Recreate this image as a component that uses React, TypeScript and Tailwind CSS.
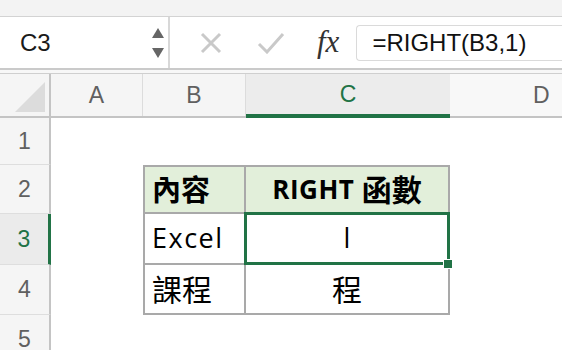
import React from "react";

const cols = "grid grid-cols-[51px_92px_103px_204px_1fr]";
const cellFont = { fontFamily: '"Open Sans", "Noto Sans CJK TC", sans-serif' };

function RowHead({ n, active = false, h }: { n: number; active?: boolean; h: string }) {
  return (
    <div
      className={`${h} flex items-center justify-center border-b border-[#dedede] text-[23px] ${
        active ? "bg-[#ebebeb] text-[#217346] border-r-[3px] border-r-[#217346]" : "bg-[#f5f5f5] text-[#606060] border-r-2 border-r-[#c4c4c4]"
      }`}
      style={{ fontFamily: '"Liberation Sans", Arial, sans-serif' }}
    >
      {n}
    </div>
  );
}

export default function App() {
  return (
    <div className="w-[562px] h-[350px] overflow-hidden bg-white" style={{ fontFamily: '"Liberation Sans", Arial, sans-serif' }}>
      {/* top strip */}
      <div className="h-[17px] bg-[#f3f3f3] border-b border-[#d3d3d3]" />

      {/* formula bar */}
      <div className="h-[53px] flex bg-white border-b-2 border-[#cacaca]">
        <div className="w-[170px] flex items-center justify-between pl-[20px] pr-[3px] border-r-2 border-[#d8d8d8]">
          <span className="text-[24px] text-[#1a1a1a]">C3</span>
          <svg width="14" height="34" viewBox="0 0 14 34">
            <path d="M7 2 L13 12 L1 12 Z" fill="#666" />
            <path d="M1 22 L13 22 L7 32 Z" fill="#666" />
          </svg>
        </div>
        <div className="flex-1 flex items-center">
          <svg className="ml-[30px]" width="22" height="22" viewBox="0 0 22 22">
            <path d="M2 2 L20 20 M20 2 L2 20" stroke="#c9c9c9" strokeWidth="3" />
          </svg>
          <svg className="ml-[35px]" width="28" height="22" viewBox="0 0 28 22">
            <path d="M2 12 L10 20 L26 2" stroke="#c9c9c9" strokeWidth="3" fill="none" />
          </svg>
          <span
            className="ml-[32px] text-[31px] italic text-[#333]"
            style={{ fontFamily: '"Liberation Serif", "DejaVu Serif", serif' }}
          >
            fx
          </span>
          <div className="ml-[17px] h-[36px] flex-1 flex items-center pl-[15px] rounded-l-[4px] border border-r-0 border-[#dadada]">
            <span className="text-[24px] text-[#111]">=RIGHT(B3,1)</span>
          </div>
        </div>
      </div>
      <div className="h-[4px] bg-[#f7f7f7] border-b border-[#cfcfcf]" />

      {/* column headers */}
      <div className={`${cols} h-[44px] border-b-2 border-[#c4c4c4] text-[23px]`}>
        <div className="relative bg-[#f5f5f5] border-r-2 border-[#c4c4c4]">
          <svg className="absolute right-[4px] bottom-[4px]" width="30" height="30" viewBox="0 0 30 30">
            <path d="M30 0 L30 30 L0 30 Z" fill="#dcdcdc" />
          </svg>
        </div>
        <div className="flex items-center justify-center bg-[#f5f5f5] border-r border-[#dcdcdc] text-[#606060]">A</div>
        <div className="flex items-center justify-center bg-[#f5f5f5] border-r border-[#dcdcdc] text-[#606060]">B</div>
        <div className="flex items-center justify-center bg-[#ececec] border-b-[4px] border-[#217346] text-[#217346] -mb-[2px]">C</div>
        <div className="flex items-center pl-[83px] bg-[#f8f8f8] text-[#606060]">D</div>
      </div>

      {/* rows */}
      <div className={cols} style={cellFont}>
        <RowHead n={1} h="h-[47px]" />
        <div />
        <div />
        <div />
        <div />

        <RowHead n={2} h="h-[49px]" />
        <div />
        <div className="flex items-center pl-[7px] bg-[#e2efda] border-2 border-[#a9a9a9] font-bold text-[29px] text-black">
          內容
        </div>
        <div className="flex items-center justify-center bg-[#e2efda] border-y-2 border-r-2 border-[#a9a9a9] font-bold text-black">
          <span className="text-[26px] tracking-[0.5px]">RIGHT&nbsp;</span>
          <span className="text-[30px]">函數</span>
        </div>
        <div />

        <RowHead n={3} active h="h-[51px]" />
        <div />
        <div className="flex items-center pl-[7px] border-x-2 border-b-2 border-[#a9a9a9] text-[27px] tracking-[1.5px] text-black">
          Excel
        </div>
        <div className="relative flex items-center justify-center border-r-2 border-b-2 border-[#a9a9a9] text-[27px] text-black">
          l
          <div className="absolute -top-[2px] -left-[2px] -right-[2px] -bottom-[2px] border-[3px] border-[#217346]" />
          <div className="absolute -right-[5px] -bottom-[6px] w-[10px] h-[10px] bg-[#217346] border border-white" />
        </div>
        <div />

        <RowHead n={4} h="h-[50px]" />
        <div />
        <div className="flex items-center pl-[7px] border-x-2 border-b-2 border-[#a9a9a9] text-[30px] text-black">
          課程
        </div>
        <div className="flex items-center justify-center border-r-2 border-b-2 border-[#a9a9a9] text-[30px] text-black">
          程
        </div>
        <div />

        <RowHead n={5} h="h-[50px]" />
        <div />
        <div />
        <div />
        <div />
      </div>
    </div>
  );
}
